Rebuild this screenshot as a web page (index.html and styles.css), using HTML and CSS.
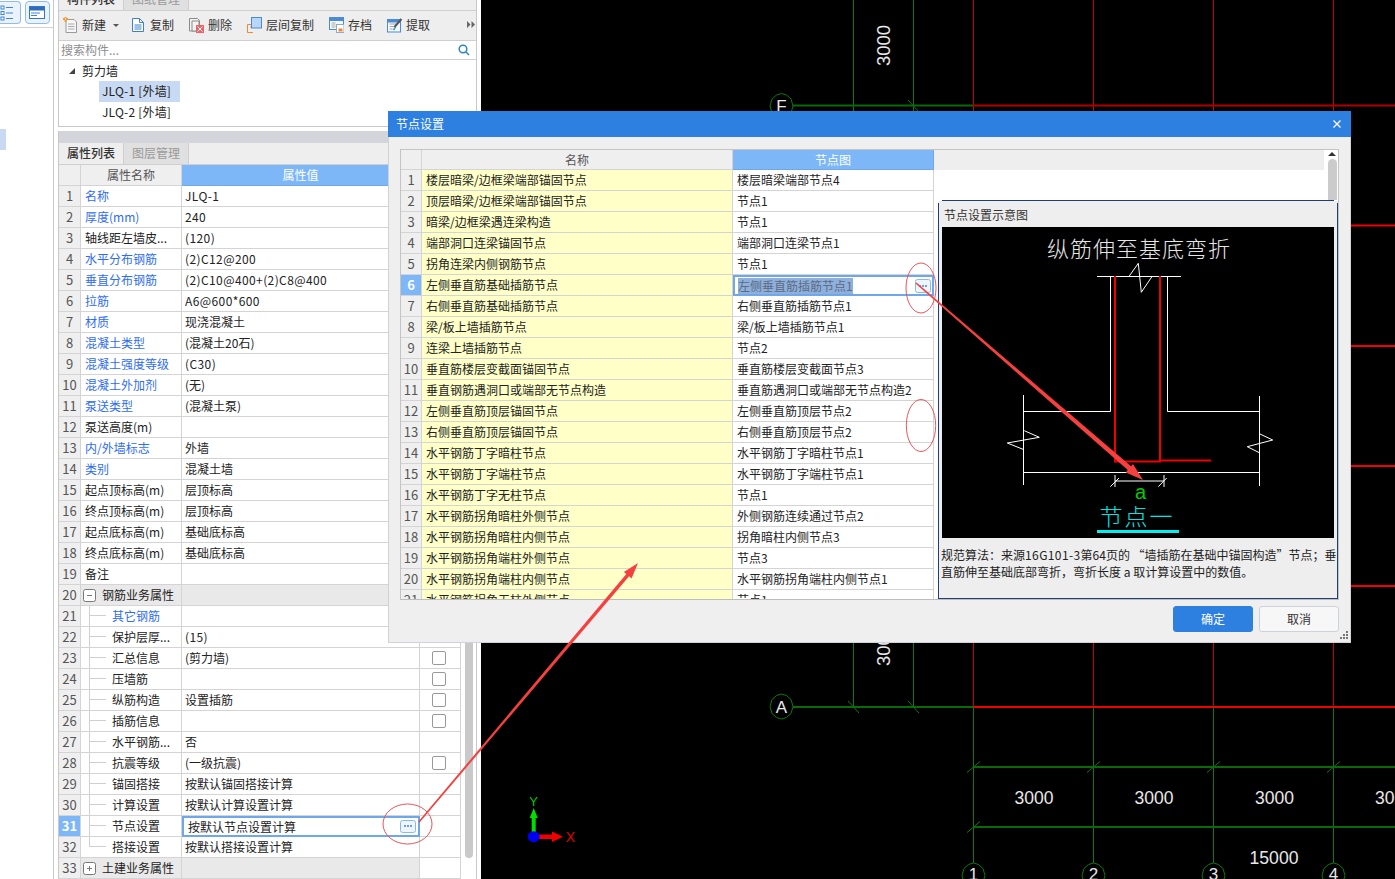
FILE: index.html
```html
<!DOCTYPE html>
<html lang="zh-CN">
<head>
<meta charset="utf-8">
<title>节点设置</title>
<link rel="stylesheet" href="styles.css">
</head>
<body>
<div class="app">
  <aside class="rail">
    <div class="rail-top">
      <span class="rail-btn rail-btn-a">
        <svg width="21" height="23" viewBox="0 0 21 23"><g class="ri-blue"><rect x="2" y="5" width="3" height="3"/><rect x="2" y="10.5" width="3" height="3"/><rect x="2" y="16" width="3" height="3"/></g><path class="ri-line" d="M7 6.5h7M7 12h7M7 17.500h7"/></svg>
      </span>
      <span class="rail-btn rail-btn-b">
        <svg width="25" height="23" viewBox="0 0 25 23"><rect x="4.500" y="5.500" width="15" height="12" class="ri-win"/><rect x="5" y="6" width="14" height="3.500" class="ri-dark"/><path class="ri-line" d="M6 12h9M6 14.500h6"/></svg>
      </span>
    </div>
    <div class="rail-mark"></div>
  </aside>

  <section class="side">
    <div class="comp-panel">
      <div class="tabs">
        <span class="tab tab-on">构件列表</span>
        <span class="tab">图纸管理</span>
      </div>
      <div class="toolbar">
        <span class="tool">
          <svg width="15" height="16" viewBox="0 0 15 16"><path class="ic-doc" d="M3 2.500h8l2.500 2.500v10.500H3z"/><path class="ic-gl" d="M5 7h6.500M5 9.500h6.500M5 12h6.500"/><path class="ic-or" d="M0 1h2v2H0zM3 1h2v2H3zM1.500 3h2v2h-2zM1.500 0h2v1h-2z"/></svg>
          新建<i class="caret"></i>
        </span>
        <span class="tool">
          <svg width="15" height="16" viewBox="0 0 15 16"><path class="ic-blue" d="M1.500 1.500h7l4 4v9h-11z"/><path class="ic-bl" d="M8.500 1.500v4h4M3.500 8h7M3.500 10h7M3.500 12h7"/></svg>
          复制
        </span>
        <span class="tool">
          <svg width="15" height="16" viewBox="0 0 15 16"><path class="ic-grey" d="M.5 1.500h8l2 2v10.500h-10z"/><path class="ic-grey" d="M3 4h7v10H3z"/><rect x="7" y="8" width="8" height="8" class="ic-red"/><path class="ic-x" d="M8.500 9.500l5 5M13.500 9.500l-5 5"/></svg>
          删除
        </span>
        <span class="tool">
          <svg width="15" height="16" viewBox="0 0 15 16"><path class="ic-orl" d="M5.500 7.500H.5v8h5.500M.5 15.500v-4M3 10h2"/><rect x="4.500" y=".5" width="10" height="10.500" class="ic-sq"/></svg>
          层间复制
        </span>
        <span class="tool">
          <svg width="15" height="16" viewBox="0 0 15 16"><rect x=".5" y=".5" width="14" height="12" class="ic-winb"/><rect x=".5" y=".5" width="14" height="3" class="ic-fill-b"/><path class="ic-gl" d="M2.500 6h4M2.500 8h4M2.500 10h4"/><rect x="7.500" y="7.500" width="7.500" height="8" class="ic-save"/><rect x="9.500" y="11.500" width="4" height="3" class="ic-fill-o"/></svg>
          存档
        </span>
        <span class="tool">
          <svg width="15" height="16" viewBox="0 0 15 16"><rect x=".5" y="2.500" width="13" height="12.500" class="ic-winb"/><rect x=".5" y="2.500" width="13" height="2.500" class="ic-fill-b"/><path class="ic-gl" d="M2.500 7h7M2.500 9.500h5M2.500 12h3"/><path class="ic-pen" d="M14.500 2l-7 8"/><path class="ic-teal" d="M8.500 10l-2 3"/></svg>
          提取
        </span>
        <svg class="tool-more" width="8" height="7" viewBox="0 0 8 7"><path d="M0 0l3.500 3.500L0 7zM4.500 0L8 3.500 4.500 7z"/></svg>
      </div>
      <div class="search">
        <span>搜索构件...</span>
        <svg width="12" height="12" viewBox="0 0 12 12"><circle cx="5" cy="5" r="3.800" class="ic-search"/><path class="ic-search" d="M7.800 7.800L11 11"/></svg>
      </div>
      <div class="tree">
        <div class="tree-root"><i class="tree-tri"></i>剪力墙</div>
        <div class="tree-leaf tree-leaf-on">JLQ-1 [外墙]</div>
        <div class="tree-leaf">JLQ-2 [外墙]</div>
      </div>
    </div>

    <div class="prop-panel">
      <div class="prop-bar"></div>
      <div class="tabs tabs-prop">
        <span class="tab tab-on">属性列表</span>
        <span class="tab">图层管理</span>
      </div>
      <div class="prop-body">
        <table class="grid prop-grid">
          <colgroup><col class="pc-n"><col class="pc-name"><col class="pc-val"><col class="pc-chk"></colgroup>
          <thead><tr><th></th><th>属性名称</th><th class="hd-on">属性值</th><th class="hd-on"></th></tr></thead>
          <tbody>
            <tr><td class="n">1</td><td class="lk">名称</td><td class="lat">JLQ-1</td><td></td></tr>
            <tr><td class="n">2</td><td class="lk">厚度(mm)</td><td class="lat">240</td><td></td></tr>
            <tr><td class="n">3</td><td>轴线距左墙皮...</td><td class="lat">(120)</td><td></td></tr>
            <tr><td class="n">4</td><td class="lk">水平分布钢筋</td><td class="lat">(2)C12@200</td><td></td></tr>
            <tr><td class="n">5</td><td class="lk">垂直分布钢筋</td><td class="lat">(2)C10@400+(2)C8@400</td><td></td></tr>
            <tr><td class="n">6</td><td class="lk">拉筋</td><td class="lat">A6@600*600</td><td></td></tr>
            <tr><td class="n">7</td><td class="lk">材质</td><td>现浇混凝土</td><td></td></tr>
            <tr><td class="n">8</td><td class="lk">混凝土类型</td><td>(混凝土20石)</td><td></td></tr>
            <tr><td class="n">9</td><td class="lk">混凝土强度等级</td><td class="lat">(C30)</td><td></td></tr>
            <tr><td class="n">10</td><td class="lk">混凝土外加剂</td><td>(无)</td><td></td></tr>
            <tr><td class="n">11</td><td class="lk">泵送类型</td><td>(混凝土泵)</td><td></td></tr>
            <tr><td class="n">12</td><td>泵送高度(m)</td><td></td><td></td></tr>
            <tr><td class="n">13</td><td class="lk">内/外墙标志</td><td>外墙</td><td></td></tr>
            <tr><td class="n">14</td><td class="lk">类别</td><td>混凝土墙</td><td></td></tr>
            <tr><td class="n">15</td><td>起点顶标高(m)</td><td>层顶标高</td><td></td></tr>
            <tr><td class="n">16</td><td>终点顶标高(m)</td><td>层顶标高</td><td></td></tr>
            <tr><td class="n">17</td><td>起点底标高(m)</td><td>基础底标高</td><td></td></tr>
            <tr><td class="n">18</td><td>终点底标高(m)</td><td>基础底标高</td><td></td></tr>
            <tr><td class="n">19</td><td>备注</td><td></td><td></td></tr>
            <tr><td class="n">20</td><td class="grp"><svg class="box" width="13" height="13" viewBox="0 0 13 13"><rect x=".5" y=".5" width="12" height="12" rx="2"/><path d="M4 6.500h5"/></svg>钢筋业务属性</td><td class="grp-v"></td><td></td></tr>
            <tr><td class="n">21</td><td class="tr lk">其它钢筋</td><td></td><td></td></tr>
            <tr><td class="n">22</td><td class="tr">保护层厚...</td><td class="lat">(15)</td><td></td></tr>
            <tr><td class="n">23</td><td class="tr">汇总信息</td><td>(剪力墙)</td><td class="c"><i class="chk"></i></td></tr>
            <tr><td class="n">24</td><td class="tr">压墙筋</td><td></td><td class="c"><i class="chk"></i></td></tr>
            <tr><td class="n">25</td><td class="tr">纵筋构造</td><td>设置插筋</td><td class="c"><i class="chk"></i></td></tr>
            <tr><td class="n">26</td><td class="tr">插筋信息</td><td></td><td class="c"><i class="chk"></i></td></tr>
            <tr><td class="n">27</td><td class="tr">水平钢筋...</td><td>否</td><td></td></tr>
            <tr><td class="n">28</td><td class="tr">抗震等级</td><td>(一级抗震)</td><td class="c"><i class="chk"></i></td></tr>
            <tr><td class="n">29</td><td class="tr">锚固搭接</td><td>按默认锚固搭接计算</td><td></td></tr>
            <tr><td class="n">30</td><td class="tr">计算设置</td><td>按默认计算设置计算</td><td></td></tr>
            <tr><td class="n n-on">31</td><td class="tr">节点设置</td><td class="edit"><div class="edit-in"><span>按默认节点设置计算</span><svg class="more" width="16" height="13" viewBox="0 0 16 13"><rect x=".5" y=".5" width="15" height="12" rx="2"/><path d="M4 6h2M7 6h2M10 6h2"/></svg></div></td><td></td></tr>
            <tr><td class="n">32</td><td class="tr tr-end">搭接设置</td><td>按默认搭接设置计算</td><td></td></tr>
            <tr><td class="n">33</td><td class="grp"><svg class="box" width="13" height="13" viewBox="0 0 13 13"><rect x=".5" y=".5" width="12" height="12" rx="2"/><path d="M4 6.500h5M6.500 4v5"/></svg>土建业务属性</td><td class="grp-v"></td><td></td></tr>
          </tbody>
        </table>
        <div class="prop-scroll"></div>
      </div>
    </div>
  </section>

  <main class="canvas">
    <svg class="cad" width="914" height="879" viewBox="481 0 914 879">
      <defs><polygon id="axis" points="0,-12.500 5,-11 9.500,-7 11.500,0 9.500,7 5,11 0,12.500 -5,11 -9.500,7 -11.500,0 -9.500,-7 -5,-11"/></defs>
      <path class="cad-red" d="M973.500 0V707M1093.500 0V707M1213.500 0V707M1333.500 0V707"/>
      <path class="cad-red3" d="M973 105.500H1395"/>
      <path class="cad-red2" d="M973 225.500H1395M973 346H1395M973 466H1395M973 586H1395M973 707H1395"/>
      <path class="cad-green" d="M853.500 0V707M913.500 0V707M973.500 707V879M1093.500 707V879M1213.500 707V879M1333.500 707V879"/>
      <path class="cad-green2" d="M793 105.500H973M793 707H973M973 767H1395M973 827H1395"/>
      <path class="cad-tick" d="M908 100l11 12M848 701l11 12M908 701l11 12M967 772.500l13-11M1087 772.500l13-11M1207 772.500l13-11M1327 772.500l13-11M967 832.500l13-11"/>
      <use href="#axis" class="cad-axis" x="781.500" y="106"/>
      <use href="#axis" class="cad-axis" x="781.500" y="706.500"/>
      <use href="#axis" class="cad-axis" x="973.500" y="875.500"/>
      <use href="#axis" class="cad-axis" x="1093.500" y="875.500"/>
      <use href="#axis" class="cad-axis" x="1213.500" y="875.500"/>
      <use href="#axis" class="cad-axis" x="1333.500" y="875.500"/>
      <text class="cad-t cad-l" x="781.500" y="112">F</text>
      <text class="cad-t cad-l" x="781.500" y="713">A</text>
      <text class="cad-t cad-l" x="973.500" y="880">1</text>
      <text class="cad-t cad-l" x="1093.500" y="880">2</text>
      <text class="cad-t cad-l" x="1213.500" y="880">3</text>
      <text class="cad-t cad-l" x="1333.500" y="880">4</text>
      <text class="cad-t" x="1034" y="804" textLength="39" lengthAdjust="spacingAndGlyphs">3000</text>
      <text class="cad-t" x="1154" y="804" textLength="39" lengthAdjust="spacingAndGlyphs">3000</text>
      <text class="cad-t" x="1274.500" y="804" textLength="39" lengthAdjust="spacingAndGlyphs">3000</text>
      <text class="cad-t" x="1394.500" y="804" textLength="39" lengthAdjust="spacingAndGlyphs">3000</text>
      <text class="cad-t" x="1274" y="864" textLength="49" lengthAdjust="spacingAndGlyphs">15000</text>
      <text class="cad-t" transform="translate(890,45.500) rotate(-90)" textLength="41" lengthAdjust="spacingAndGlyphs">3000</text>
      <text class="cad-t" transform="translate(890,645.500) rotate(-90)" textLength="41" lengthAdjust="spacingAndGlyphs">3000</text>
      <path class="ax-g" d="M533.700 808l4 10h-2v16h-4v-16h-2z"/>
      <path class="ax-r" d="M537 834.500h15v-3l11 5.200-11 5.200v-3H537z"/>
      <ellipse class="ax-b" cx="533.700" cy="836.700" rx="6" ry="5.500"/>
      <text class="ax-y" x="533.700" y="806">Y</text>
      <text class="ax-x" x="570.500" y="842">X</text>
    </svg>
  </main>
</div>

<div class="dialog">
  <div class="dlg-title"><span>节点设置</span><svg width="10" height="10" viewBox="0 0 10 10"><path d="M1.500 1.500l7 7M8.500 1.500l-7 7"/></svg></div>
  <div class="dlg-body">
    <div class="frame">
      <div class="frame-left">
        <table class="grid node-grid">
          <colgroup><col class="nc-n"><col class="nc-name"><col class="nc-val"></colgroup>
          <thead><tr><th></th><th>名称</th><th class="hd-on">节点图</th></tr></thead>
          <tbody>
            <tr><td class="n">1</td><td class="ye">楼层暗梁/边框梁端部锚固节点</td><td>楼层暗梁端部节点4</td></tr>
            <tr><td class="n">2</td><td class="ye">顶层暗梁/边框梁端部锚固节点</td><td>节点1</td></tr>
            <tr><td class="n">3</td><td class="ye">暗梁/边框梁遇连梁构造</td><td>节点1</td></tr>
            <tr><td class="n">4</td><td class="ye">端部洞口连梁锚固节点</td><td>端部洞口连梁节点1</td></tr>
            <tr><td class="n">5</td><td class="ye">拐角连梁内侧钢筋节点</td><td>节点1</td></tr>
            <tr><td class="n n-on">6</td><td class="ye">左侧垂直筋基础插筋节点</td><td class="edit"><div class="edit-in edit-node"><span class="sel">左侧垂直筋插筋节点1</span><svg class="more" width="16" height="14" viewBox="0 0 16 14"><rect x=".5" y=".5" width="15" height="13" rx="2"/><path d="M4 7h2M7 7h2M10 7h2"/></svg></div></td></tr>
            <tr><td class="n">7</td><td class="ye">右侧垂直筋基础插筋节点</td><td>右侧垂直筋插筋节点1</td></tr>
            <tr><td class="n">8</td><td class="ye">梁/板上墙插筋节点</td><td>梁/板上墙插筋节点1</td></tr>
            <tr><td class="n">9</td><td class="ye">连梁上墙插筋节点</td><td>节点2</td></tr>
            <tr><td class="n">10</td><td class="ye">垂直筋楼层变截面锚固节点</td><td>垂直筋楼层变截面节点3</td></tr>
            <tr><td class="n">11</td><td class="ye">垂直钢筋遇洞口或端部无节点构造</td><td>垂直筋遇洞口或端部无节点构造2</td></tr>
            <tr><td class="n">12</td><td class="ye">左侧垂直筋顶层锚固节点</td><td>左侧垂直筋顶层节点2</td></tr>
            <tr><td class="n">13</td><td class="ye">右侧垂直筋顶层锚固节点</td><td>右侧垂直筋顶层节点2</td></tr>
            <tr><td class="n">14</td><td class="ye">水平钢筋丁字暗柱节点</td><td>水平钢筋丁字暗柱节点1</td></tr>
            <tr><td class="n">15</td><td class="ye">水平钢筋丁字端柱节点</td><td>水平钢筋丁字端柱节点1</td></tr>
            <tr><td class="n">16</td><td class="ye">水平钢筋丁字无柱节点</td><td>节点1</td></tr>
            <tr><td class="n">17</td><td class="ye">水平钢筋拐角暗柱外侧节点</td><td>外侧钢筋连续通过节点2</td></tr>
            <tr><td class="n">18</td><td class="ye">水平钢筋拐角暗柱内侧节点</td><td>拐角暗柱内侧节点3</td></tr>
            <tr><td class="n">19</td><td class="ye">水平钢筋拐角端柱外侧节点</td><td>节点3</td></tr>
            <tr><td class="n">20</td><td class="ye">水平钢筋拐角端柱内侧节点</td><td>水平钢筋拐角端柱内侧节点1</td></tr>
            <tr><td class="n">21</td><td class="ye">水平钢筋拐角无柱外侧节点</td><td>节点1</td></tr>
          </tbody>
        </table>
      </div>
      <div class="frame-right">
        <div class="right-top">
          <div class="band-col"><div class="band"></div></div>
          <div class="rscroll"><i class="rs-up"></i><i class="rs-thumb"></i></div>
        </div>
        <div class="preview">
          <div class="pv-title">节点设置示意图</div>
          <svg class="pv-pic" width="392" height="311" viewBox="942 227 392 311">
            <text class="dg-title" x="1139" y="257">纵筋伸至基底弯折</text>
            <path class="dg-w" d="M1097 276.500H1181M1110.500 276V411.500H1023.500M1167.500 276V411.500H1259.500M1023.500 395V485M1259.500 396V486M1023.500 472.500H1259.500M1115 481H1164M1115 475V487M1164 475V487"/>
            <path class="dg-thin" d="M1129.300 276l9-12.700 3 29 10.400-15.300M1024.300 430.700l15 6.600-32 5.700 15.700 6.300M1260 434l12.700 6-25.400 6.700 12 6M1110.300 486.700l8.700-8.700M1158.300 486.700l8.400-8.700"/>
            <path class="dg-r" d="M1115 276V461.500H1160V276M1160 460.500H1211"/>
            <text class="dg-a" x="1140.500" y="499">a</text>
            <text class="dg-c" x="1137" y="525">节点一</text>
            <rect class="dg-u" x="1097" y="530" width="82" height="3"/>
          </svg>
          <p class="pv-desc">规范算法：来源<span class="lat-s">16G101-3</span>第64页的 “墙插筋在基础中锚固构造”节点；垂<br>直筋伸至基础底部弯折，弯折长度 a 取计算设置中的数值。</p>
        </div>
      </div>
    </div>
    <div class="dlg-foot">
      <span class="btn btn-ok">确定</span>
      <span class="btn">取消</span>
    </div>
  </div>
  <svg class="grip" width="9" height="9" viewBox="0 0 9 9"><path d="M6 0h2v2H6zM3 3h2v2H3zM6 3h2v2H6zM0 6h2v2H0zM3 6h2v2H3zM6 6h2v2H6z"/></svg>
</div>

<svg class="marks" width="1395" height="879" viewBox="0 0 1395 879">
  <polygon class="pen" points="916.520,282.400 1131.040,466.310 1133,464 1143,480 1125.800,472.400 1127.760,470.090 915.480,283.600"/>
  <polygon class="pen" points="419.600,822.500 629.080,576.360 631.500,578.400 638,563 623.900,572 626.320,574.040 418.400,821.500"/>
  <ellipse class="ring" cx="407.500" cy="824" rx="24.500" ry="20"/>
  <ellipse class="ring" cx="921" cy="288" rx="15" ry="25"/>
  <ellipse class="ring" cx="921" cy="425.500" rx="14.700" ry="26"/>
</svg>
</body>
</html>
```
FILE: styles.css
```css
* { box-sizing: border-box; }
html, body { margin: 0; height: 100%; overflow: hidden; background: #fff; }
body {
  position: relative;
  width: 1395px;
  height: 879px;
  font: 12px/20px "Noto Sans CJK SC", "Noto Sans", sans-serif;
  color: #222;
}
.app { display: flex; height: 879px; overflow: hidden; }

/* left rail */
.rail { width: 54px; flex: none; border-right: 1px solid #c9c9c9; background: #fff; }
.rail-top { display: flex; gap: 4px; height: 28px; border-bottom: 1px solid #d2d2d2; padding-top: 1px; }
.rail-btn {
  display: block; height: 23px; border: 1px solid #8fbbee; border-radius: 4px; background: #eaf3fd;
}
.rail-btn svg { display: block; margin: -1px; }
.rail-btn-a { width: 21px; border-left: 0; border-radius: 0 4px 4px 0; }
.rail-btn-b { width: 25px; }
.ri-blue rect { fill: #fff; stroke: #3f86d8; stroke-width: 1; }
.ri-line { stroke: #3f86d8; stroke-width: 1; fill: none; }
.ri-win { fill: #fff; stroke: #2f78cf; }
.ri-dark { fill: #2f6cb8; }
.rail-mark { width: 6px; height: 21px; margin-top: 101px; background: #c8d9f3; }

/* side column */
.side { width: 427px; flex: none; padding: 0 4px; display: flex; flex-direction: column; gap: 4px; background: #fff; }
.comp-panel { margin-top: -11px; border: 1px solid #c8c8c8; border-top: 0; height: 138px; background: #fff; }
.tabs { display: flex; height: 22px; background: #eeeeee; border-bottom: 1px solid #cfcfcf; }
.tab {
  width: 65px; height: 21px; line-height: 20px; text-align: center; color: #999;
  background: #e0e0e0; border-right: 1px solid #cfcfcf;
}
.tab-on { color: #333; background: #eeeeee; font-weight: 500; }

.toolbar {
  display: flex; align-items: center; gap: 15px; height: 30px; padding: 0 0 2px 4px;
  background: #eeeeee; border-bottom: 1px solid #cfcfcf;
}
.tool { display: flex; align-items: center; gap: 4px; color: #333; }
.tool svg { display: block; margin-top: 1px; }
.caret {
  width: 0; height: 0; margin: 1px -3px 0 3px;
  border-left: 3px solid transparent; border-right: 3px solid transparent; border-top: 3px solid #555;
}
.tool-more { margin-left: auto; margin-right: 1px; fill: #666; }
.ic-doc { fill: #f7f7f7; stroke: #9a9a9a; }
.ic-gl { stroke: #a8a8a8; fill: none; }
.ic-or { fill: #f29a2e; }
.ic-blue { fill: #fff; stroke: #3d80c9; }
.ic-bl { stroke: #3d80c9; fill: none; }
.ic-grey { fill: #f3f3f3; stroke: #8a8a8a; }
.ic-red { fill: #e9646a; }
.ic-x { stroke: #fff; fill: none; }
.ic-orl { stroke: #ee8a34; fill: none; }
.ic-sq { fill: #b7d6f8; stroke: #4b8bd3; }
.ic-winb { fill: #f4f7fb; stroke: #4b8bd3; }
.ic-fill-b { fill: #4b8bd3; stroke: #4b8bd3; }
.ic-save { fill: #fff; stroke: #8fa9c6; }
.ic-fill-o { fill: #ee8a34; }
.ic-pen { stroke: #555; stroke-width: 2; fill: none; }
.ic-teal { stroke: #35a4a0; stroke-width: 1.500; fill: none; }

.search {
  display: flex; align-items: center; justify-content: space-between; height: 19px;
  padding: 0 6px 0 2px; border-bottom: 1px solid #cfcfcf; color: #8e8e8e; background: #fff;
}
.search svg { display: block; }
.ic-search { fill: none; stroke: #2d86bf; stroke-width: 1.500; }

.tree { height: 66px; padding-top: 1px; }
.tree-root { display: flex; align-items: center; height: 20px; padding-left: 10px; color: #222; }
.tree-tri {
  width: 0; height: 0; margin-right: 7px;
  border-bottom: 6px solid #444; border-left: 6px solid transparent;
}
.tree-leaf {
  width: 81px; height: 21px; line-height: 19px; margin-left: 40px; padding-left: 3px;
  white-space: nowrap; letter-spacing: .2px;
}
.tree-leaf-on { background: #c8d9f3; }

/* property panel */
.prop-panel { flex: 1; border-left: 1px solid #c8c8c8; border-right: 1px solid #c8c8c8; min-height: 0; }
.prop-bar { height: 12px; background: #d4d5da; }
.tabs-prop { background: #eeeeee; }
.prop-body { display: flex; }

.grid { border-collapse: separate; border-spacing: 0; table-layout: fixed; }
.grid th, .grid td {
  height: 21px; padding: 0 0 0 4px; border-right: 1px solid #d4d4d4; border-bottom: 1px solid #d4d4d4;
  font-weight: 400; line-height: 20px; white-space: nowrap; overflow: hidden; text-align: left;
}
.grid th { background: #efefef; text-align: center; color: #555; padding: 0; }
.grid th.hd-on { background: #7db7f8; color: #fff; border-color: #6ea8e8; }
.grid td.n { background: #efefef; color: #555; font-size: 13px; text-align: center; padding: 0; }
.grid td.n-on { background: #7db7f8; color: #fff; font-weight: 700; }

.prop-grid { width: 402px; flex: none; }
.pc-n { width: 22px; } .pc-name { width: 101px; } .pc-val { width: 238px; } .pc-chk { width: 41px; }
.prop-grid td:nth-child(3) { padding-left: 3px; }
.grid td.lat { letter-spacing: .4px; }
.grid td.lk { color: #2f6df0; }
.grid td.grp { background: #e9e9e9; padding-left: 2px; }
.grid td.grp-v { background: #e9e9e9; }
.box { vertical-align: -2px; margin-right: 6px; fill: #fff; stroke: #777; }
.grid td.tr {
  padding-left: 31px;
  background:
    linear-gradient(#cfcfcf, #cfcfcf) 8px 0 / 1px 100% no-repeat,
    linear-gradient(#cfcfcf, #cfcfcf) 8px 9px / 17px 1px no-repeat;
}
.grid td.tr-end {
  background:
    linear-gradient(#cfcfcf, #cfcfcf) 8px 0 / 1px 10px no-repeat,
    linear-gradient(#cfcfcf, #cfcfcf) 8px 9px / 17px 1px no-repeat;
}
.grid td.c { padding: 0; }
.chk { display: block; width: 14px; height: 14px; margin: -1px 0 0 12px; border: 1px solid #999; border-radius: 2px; background: #fff; }
.prop-grid td.edit, .node-grid td.edit { padding: 0; border: 0; }
.edit-in {
  display: flex; align-items: center; justify-content: space-between; height: 21px;
  padding: 0 2px 0 4px; border: 2px solid #6ea8e8; line-height: 17px;
}
.edit-node { padding-left: 3px; padding-right: 1px; }
.more { display: block; fill: #eef5fc; stroke: #8ab8ea; }
.more path { stroke: #3f86d8; stroke-width: 1.500; fill: none; }
.sel { background: #8fb0dc; color: #5b6b83; line-height: 16px; height: 16px; }
.prop-scroll { width: 8px; height: 680px; margin: 13px 0 0 4px; border-radius: 0 0 5px 5px; background: #c9c9c9; }

/* CAD canvas */
.canvas { flex: 1; background: #000; overflow: hidden; }
.cad { display: block; }
.cad-red { stroke: #cc0000; stroke-width: 1; fill: none; }
.cad-red2 { stroke: #f00000; stroke-width: 2; fill: none; }
.cad-red3 { stroke: #b00000; stroke-width: 2; fill: none; }
.cad-green { stroke: #0a7a0a; stroke-width: 1; fill: none; }
.cad-green2 { stroke: #0a6a0a; stroke-width: 2; fill: none; }
.cad-tick { stroke: #0a7a0a; stroke-width: 1; fill: none; }
.cad-axis { fill: #000; stroke: #0c7a0c; stroke-width: 1; }
.cad-t { fill: #e8e8e8; font: 18px "Liberation Sans", sans-serif; text-anchor: middle; }
.cad-l { font-size: 17px; }
.ax-g { fill: #00e000; }
.ax-r { fill: #f00000; }
.ax-b { fill: #0000f0; }
.ax-y { fill: #00c800; font: 13px "Liberation Sans", sans-serif; text-anchor: middle; }
.ax-x { fill: #e00000; font: 14px "Liberation Sans", sans-serif; text-anchor: middle; }

/* dialog */
.dialog {
  position: absolute; left: 388px; top: 111px; width: 963px; height: 532px;
  border: 1px solid #cfd3d8; border-top: 0; background: #efefef;
}
.dlg-title {
  display: flex; align-items: center; justify-content: space-between; height: 26px;
  margin: 0 -1px; padding: 0 9px 0 8px; background: #2e80e0; color: #fff;
}
.dlg-title svg { display: block; stroke: #fff; stroke-width: 1.300; fill: none; }
.dlg-body { padding: 12px 11px 0 11px; }
.frame { display: flex; width: 939px; height: 451px; border: 1px solid #c4c4c4; border-bottom-color: #bdbdbd; background: #fff; overflow: hidden; }
.frame-left { width: 533px; flex: none; }
.node-grid { width: 533px; }
.grid.node-grid th { height: 20px; line-height: 19px; }
.nc-n { width: 21px; } .nc-name { width: 311px; } .nc-val { width: 201px; }
.grid td.ye { background: #ffffc8; }
.frame-right { flex: 1; display: flex; flex-direction: column; min-width: 0; }
.right-top { display: flex; height: 50px; flex: none; background: #fff; }
.band-col { width: 390px; }
.band { height: 20px; background: #eeeeee; }
.rscroll { display: flex; flex-direction: column; align-items: center; padding: 2px 0 0 3px; width: 13px; }
.rs-up { width: 0; height: 0; border-left: 4px solid transparent; border-right: 4px solid transparent; border-bottom: 4px solid #333; }
.rs-thumb { width: 9px; height: 42px; margin-top: 3px; border-radius: 5px 5px 0 0; background: #cbcbcb; }

.preview {
  position: relative; flex: 1; margin: 3px 0 0 4px; padding-left: 3px;
  border: 1px solid #1f3f77; border-top: 0; background: #eeeeee;
}
.preview::before { content: ""; position: absolute; left: 3px; right: 3px; top: -3px; height: 1px; background: #1f3f77; }
.preview::after { content: ""; position: absolute; left: -1px; right: -1px; top: -2px; height: 2px; background: #eeeeee; }
.pv-title { height: 24px; line-height: 24px; padding-left: 2px; color: #333; }
.pv-pic { display: block; background: #000; }
.pv-desc { margin: 0 0 0 -1px; padding-top: 8px; line-height: 17px; color: #222; white-space: nowrap; font-size: 12px; }
.lat-s { letter-spacing: .4px; }
.dg-title { fill: #e6e6e6; font-size: 22px; letter-spacing: 1px; text-anchor: middle; font-weight: 300; }
.dg-w { stroke: #fff; stroke-width: 1; fill: none; }
.dg-thin { stroke: #fff; stroke-width: 1; fill: none; }
.dg-r { stroke: #f00000; stroke-width: 2; fill: none; }
.dg-a { fill: #00cc00; font: 20px "Liberation Sans", sans-serif; text-anchor: middle; }
.dg-c { fill: #00e6e6; font-size: 23px; letter-spacing: 2px; text-anchor: middle; font-weight: 300; }
.dg-u { fill: #00f0f0; }

.dlg-foot { display: flex; justify-content: flex-end; gap: 6px; padding-top: 6px; }
.btn {
  width: 80px; height: 26px; line-height: 24px; text-align: center; border: 1px solid #ccd2d9;
  border-radius: 3px; background: #f7f7f7; color: #333;
}
.btn-ok { background: #2e80e0; border-color: #2e80e0; color: #fff; }
.grip { position: absolute; right: 1px; bottom: 2px; fill: #777; }

/* hand-drawn marks over the screenshot */
.marks { position: absolute; left: 0; top: 0; pointer-events: none; }
.pen { fill: #f4413f; }
.ring { fill: none; stroke: #e8555a; stroke-width: 1; }
```
